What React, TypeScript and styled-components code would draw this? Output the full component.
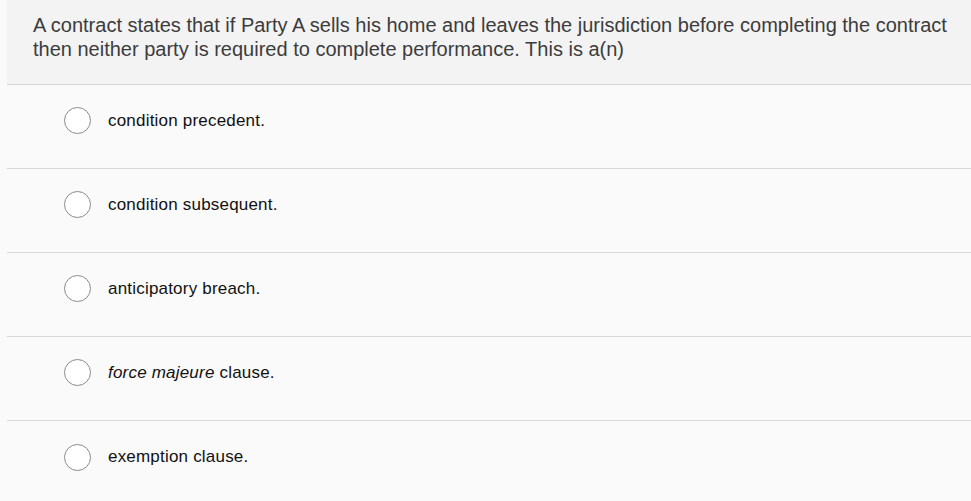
import styled, { createGlobalStyle } from "styled-components"

const GlobalStyle = createGlobalStyle`
  body {
    margin: 0;
    background: #fafafa;
    font-family: "Liberation Sans", Arial, sans-serif;
  }
`

const Page = styled.div`
  padding-left: 7px;
  width: 971px;
  box-sizing: border-box;
`

const Question = styled.div`
  background: #f3f3f3;
  border-bottom: 1px solid #d3d3d3;
  height: 85px;
  box-sizing: border-box;
  padding: 13px 10px 0 26px;
  font-size: 20px;
  line-height: 24px;
  color: #3c3c3c;
  white-space: nowrap;
`

const Row = styled.label`
  display: flex;
  align-items: center;
  gap: 17px;
  height: 84px;
  box-sizing: border-box;
  padding: 0 0 12px 57px;
  border-bottom: 1px solid #d8d8d8;
  cursor: pointer;
  &:last-child {
    border-bottom: none;
  }
`

const Circle = styled.span`
  display: inline-block;
  width: 27px;
  height: 27px;
  border-radius: 50%;
  border: 1px solid #8a8a8a;
  background: #fff;
  box-sizing: border-box;
  flex-shrink: 0;
`

const Label = styled.span`
  font-size: 17px;
  letter-spacing: 0.2px;
  color: #111;
`

const options = [
  <>condition precedent.</>,
  <>condition subsequent.</>,
  <>anticipatory breach.</>,
  <><i>force majeure</i> clause.</>,
  <>exemption clause.</>,
]

export default function App() {
  return (
    <Page>
      <GlobalStyle />
      <Question>
        A contract states that if Party A sells his home and leaves the jurisdiction before completing the contract
        <br />
        then neither party is required to complete performance. This is a(n)
      </Question>
      {options.map((o, i) => (
        <Row key={i}>
          <Circle />
          <Label>{o}</Label>
        </Row>
      ))}
    </Page>
  )
}
